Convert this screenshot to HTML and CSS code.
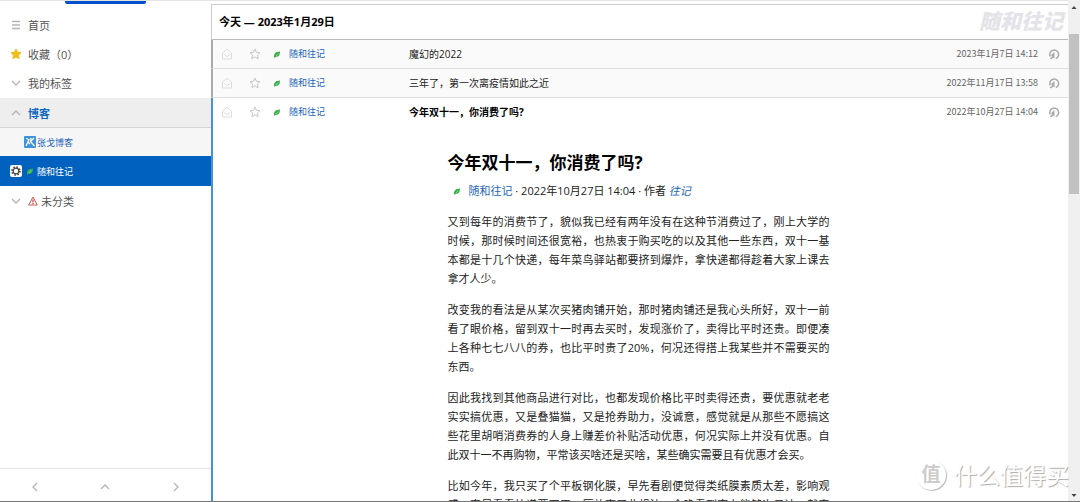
FILE: index.html
```
<!DOCTYPE html>
<html lang="zh-CN">
<head>
<meta charset="utf-8">
<title>随和往记</title>
<link rel="stylesheet" href="styles.css">
</head>
<body>
<svg class="defs" aria-hidden="true">
  <symbol id="leaf" viewBox="0 0 8 8"><path d="M1 7.200C.9 3.200 2.600 1.700 7 1.500 6.900 5.600 5.600 7 2.900 6.700L1.700 7.700Z" fill="#36b24a"/><path d="M3 6 5.200 3.600" stroke="#fff" stroke-width=".4"/></symbol>
  <symbol id="mail" viewBox="0 0 12 12"><path d="M1.500 5 6 1.200 10.500 5v6h-9zM3 6.200 5 8.200h2l2-2" fill="none" stroke="currentColor"/></symbol>
  <symbol id="star" viewBox="0 0 12 12"><path d="m6 1 1.500 3.300 3.500.4-2.600 2.400.7 3.600L6 8.900l-3.100 1.800.7-3.600L1 4.700l3.500-.4z" stroke="currentColor" stroke-linejoin="round"/></symbol>
  <symbol id="source" viewBox="0 0 12 12"><path d="M2.300 8.500A4.400 4.400 0 1 1 7.800 10.600" fill="none" stroke="currentColor" stroke-width="1.500"/><path d="M6.500 4v6.500L5.400 9.400 3 11.600 1.800 10.600 4.200 8.200 3 7z" fill="currentColor"/></symbol>
  <symbol id="down" viewBox="0 0 12 12"><path d="m2 4 4 4 4-4" fill="none" stroke="currentColor" stroke-width="1.300"/></symbol>
</svg>
<div class="app">
  <div class="topbar"><span class="topbutton"></span></div>
  <nav class="sidebar">
    <ul class="tree">
      <li><a class="item" href="#"><svg class="icon" viewBox="0 0 12 12"><path d="M2 2.500h8M2 6h8M2 9.500h8" stroke="currentColor" stroke-width="1.300"/></svg>首页</a></li>
      <li><a class="item" href="#"><svg class="icon gold" viewBox="0 0 12 12"><use href="#star"/></svg>收藏（0）</a></li>
      <li><a class="item" href="#"><svg class="icon"><use href="#down"/></svg>我的标签</a></li>
      <li><a class="item open" href="#"><svg class="icon flip"><use href="#down"/></svg>博客</a></li>
      <li><a class="feed" href="#"><span class="slot"></span><svg class="site" viewBox="0 0 12 12"><rect width="12" height="12" rx="1" fill="#3f93d6"/><path d="M2 2.500 5 3.500 2 10M4 6l2 2M7 2 6.500 5.500 10.500 10M10 2 6.500 5.500" fill="none" stroke="#fff" stroke-width="1.200"/></svg>张戈博客</a></li>
      <li><a class="feed active" href="#"><span class="slot"><svg class="gear" viewBox="0 0 12 12"><rect width="12" height="12" rx="2" fill="#fff"/><circle cx="6" cy="6" r="3.900" fill="none" stroke="#444" stroke-width="1.800" stroke-dasharray="1.500 1.560"/><circle cx="6" cy="6" r="2.800" fill="none" stroke="#444" stroke-width="1.200"/></svg></span><svg class="leaf"><use href="#leaf"/></svg>随和往记</a></li>
      <li><a class="item last" href="#"><svg class="icon"><use href="#down"/></svg><svg class="warn" viewBox="0 0 10 10"><path d="M5 1 9.300 9H.7z" fill="none" stroke="#cc5a52"/><path d="M5 3.500v3M5 7v1.200" stroke="#b94740" stroke-width="1.200"/></svg>未分类</a></li>
    </ul>
    <div class="pager">
      <button type="button" aria-label="上一个"><svg class="icon right"><use href="#down"/></svg></button>
      <button type="button" aria-label="向上"><svg class="icon flip"><use href="#down"/></svg></button>
      <button type="button" aria-label="下一个"><svg class="icon left"><use href="#down"/></svg></button>
    </div>
  </nav>
  <main class="stream">
    <header class="day"><h2>今天 — 2023年1月29日</h2><span class="name">随和往记</span></header>
    <div class="entry">
      <svg class="act"><use href="#mail"/></svg><svg class="act fav"><use href="#star"/></svg><svg class="leaf"><use href="#leaf"/></svg>
      <a class="origin" href="#">随和往记</a><span class="title">魔幻的2022</span><time>2023年1月7日 14:12</time><svg class="act src"><use href="#source"/></svg>
    </div>
    <div class="entry">
      <svg class="act"><use href="#mail"/></svg><svg class="act fav"><use href="#star"/></svg><svg class="leaf"><use href="#leaf"/></svg>
      <a class="origin" href="#">随和往记</a><span class="title">三年了，第一次离疫情如此之近</span><time>2022年11月17日 13:58</time><svg class="act src"><use href="#source"/></svg>
    </div>
    <div class="entry current">
      <svg class="act"><use href="#mail"/></svg><svg class="act fav"><use href="#star"/></svg><svg class="leaf"><use href="#leaf"/></svg>
      <a class="origin" href="#">随和往记</a><span class="title">今年双十一，你消费了吗?</span><time>2022年10月27日 14:04</time><svg class="act src"><use href="#source"/></svg>
    </div>
    <article class="article">
      <div class="content">
        <h1>今年双十一，你消费了吗?</h1>
        <div class="meta"><svg class="leaf"><use href="#leaf"/></svg><span><a href="#">随和往记</a> · 2022年10月27日 14:04 · 作者 <a href="#"><em>往记</em></a></span></div>
        <p>又到每年的消费节了，貌似我已经有两年没有在这种节消费过了，刚上大学的时候，那时候时间还很宽裕，也热衷于购买吃的以及其他一些东西，双十一基本都是十几个快递，每年菜鸟驿站都要挤到爆炸，拿快递都得趁着大家上课去拿才人少。</p>
        <p>改变我的看法是从某次买猪肉铺开始，那时猪肉铺还是我心头所好，双十一前看了眼价格，留到双十一时再去买时，发现涨价了，卖得比平时还贵。即便凑上各种七七八八的券，也比平时贵了20%，何况还得搭上我某些并不需要买的东西。</p>
        <p>因此我找到其他商品进行对比，也都发现价格比平时卖得还贵，要优惠就老老实实搞优惠，又是叠猫猫，又是抢券助力，没诚意，感觉就是从那些不愿搞这些花里胡哨消费券的人身上赚差价补贴活动优惠，何况实际上并没有优惠。自此双十一不再购物，平常该买啥还是买啥，某些确实需要且有优惠才会买。</p>
        <p>比如今年，我只买了个平板钢化膜，早先看剧便觉得类纸膜素质太差，影响观感，直尽看看快递要四天，压放弃了此想法，今晚看到京东能够次日达，就直接下单了。</p>
      </div>
    </article>
  </main>
  <div class="scroll" aria-hidden="true"><svg viewBox="0 0 10 10"><path d="M2.500 7 5 4l2.500 3z" fill="#444"/></svg><span class="thumb"></span><svg class="bottom" viewBox="0 0 10 10"><path d="m2.500 3 2.500 3 2.500-3z" fill="#444"/></svg></div>
</div>
<div class="watermark"><span class="seal">值</span><span>什么值得买</span></div>
</body>
</html>
```
FILE: styles.css
```
* { box-sizing: border-box; }
body { margin: 0; font-family: "Open Sans", "Noto Sans CJK SC", sans-serif; font-size: 11px; color: #222; background: #fff; }
a { color: #1b65b9; text-decoration: none; }
svg { flex: none; display: block; }
.defs { position: absolute; width: 0; height: 0; }
.app { height: 100vh; display: grid; grid-template: 4px minmax(0, 1fr) / 211px minmax(0, 1fr) 12px; overflow: hidden; border-bottom: 1px solid #777; }
.topbar { border-top: 1px solid #e4e4e4; padding-left: 65px; grid-column: 1 / 3; }
.topbutton { display: block; width: 81px; height: 3px; background: #0550cc; border-radius: 0 0 2px 2px; }
.sidebar { grid-column: 1; grid-row: 2; display: flex; flex-direction: column; color: #555; }
.tree { list-style: none; margin: 0; padding: 7px 0 0; flex: 1; }
.item { display: flex; align-items: center; height: 29px; padding: 0 0 2px 10px; color: #555; }
.icon { width: 12px; height: 12px; color: #b5b5b5; }
.item > .icon { margin-right: 6px; }
.gold { color: #f1bd12; fill: #f1bd12; }
.flip { transform: rotate(180deg); }
.right { transform: rotate(90deg); }
.left { transform: rotate(-90deg); }
.open { height: 30px; padding-bottom: 0; background: #eee; border-bottom: 1px solid #d5d5d5; color: #1267c0; font-weight: 700; }
.feed { display: flex; align-items: center; height: 28px; padding-left: 10px; background: #f6f6f6; font-size: 9px; }
.slot { width: 14px; }
.gear, .site { width: 12px; height: 12px; }
.site { margin-right: 1px; }
.leaf { width: 8px; height: 8px; }
.active { height: 30px; background: #0062be; color: #fff; }
.feed .leaf { margin: 0 3px 0 2px; }
.last { height: 32px; }
.warn { width: 10px; height: 10px; margin-right: 3px; }
.pager { height: 33px; display: flex; justify-content: space-around; align-items: center; border-top: 1px solid #e5e5e5; padding-top: 3px; }
.pager button { border: 0; background: none; padding: 0 20px; }
.stream { grid-column: 2; grid-row: 2; min-width: 0; overflow: hidden; border-top: 1px solid #ccc; }
.day { height: 35px; display: flex; align-items: center; justify-content: space-between; padding: 0 5px 2px 7px; border-bottom: 1px solid #bbb; border-left: 1px solid #ccc; color: #000; }
.day h2 { margin: 0; font-size: 11px; }
.name { font-size: 21px; line-height: 28px; font-style: italic; font-weight: 900; color: #e3e3e8; }
.entry { height: 29px; display: flex; align-items: center; padding: 0 8px 1px; border-left: 2px solid #aaa; border-bottom: 1px solid #e0e0e0; background: #fafafa; }
.act { width: 12px; height: 12px; color: #ddd; fill: none; }
.fav { margin-left: 16px; color: #c5c5c5; }
.entry .leaf { margin: 0 8px 0 12px; }
.origin { width: 120px; font-size: 9px; }
.title { flex: 1; font-size: 10px; }
.entry time { font-family: "Noto Sans CJK SC", sans-serif; font-size: 9px; color: #666; }
.src { margin-left: 10px; color: #aaa; }
.current { border-left-color: #4593d6; border-bottom: 0; background: #fff; padding-bottom: 2px; }
.current .title { font-weight: 700; color: #000; }
.article { min-height: 100vh; border-left: 2px solid #4593d6; padding: 24px 5px 0 1px; }
.content { max-width: 382px; margin: 0 auto; }
h1 { margin: 0; font-size: 17px; line-height: 24px; color: #000; }
.meta { display: flex; align-items: center; gap: 8px; padding-left: 5px; margin: 6px 0 11px; line-height: 20px; }
.content p { margin: 0 0 12px; line-height: 19px; text-align: justify; }
.scroll { grid-column: 3; grid-row: 1 / 3; display: flex; flex-direction: column; align-items: center; background: #f0f0f0; padding-top: 2px; }
.scroll svg { width: 10px; height: 10px; }
.thumb { width: 10px; height: 160px; margin-top: 22px; background: #c1c1c1; }
.scroll .bottom { margin-top: auto; }
.watermark { position: absolute; right: 11px; bottom: 11px; display: flex; align-items: center; gap: 8px; color: #fff; font-size: 23px; line-height: 32px; text-shadow: 1px 1px 1px #aaa; }
.seal { width: 30px; height: 30px; border-radius: 50%; font-size: 19px; line-height: 28px; text-align: center; color: #ccc; text-shadow: none; font-weight: 700; box-shadow: 1px 1px 1px #bbb; }
```
